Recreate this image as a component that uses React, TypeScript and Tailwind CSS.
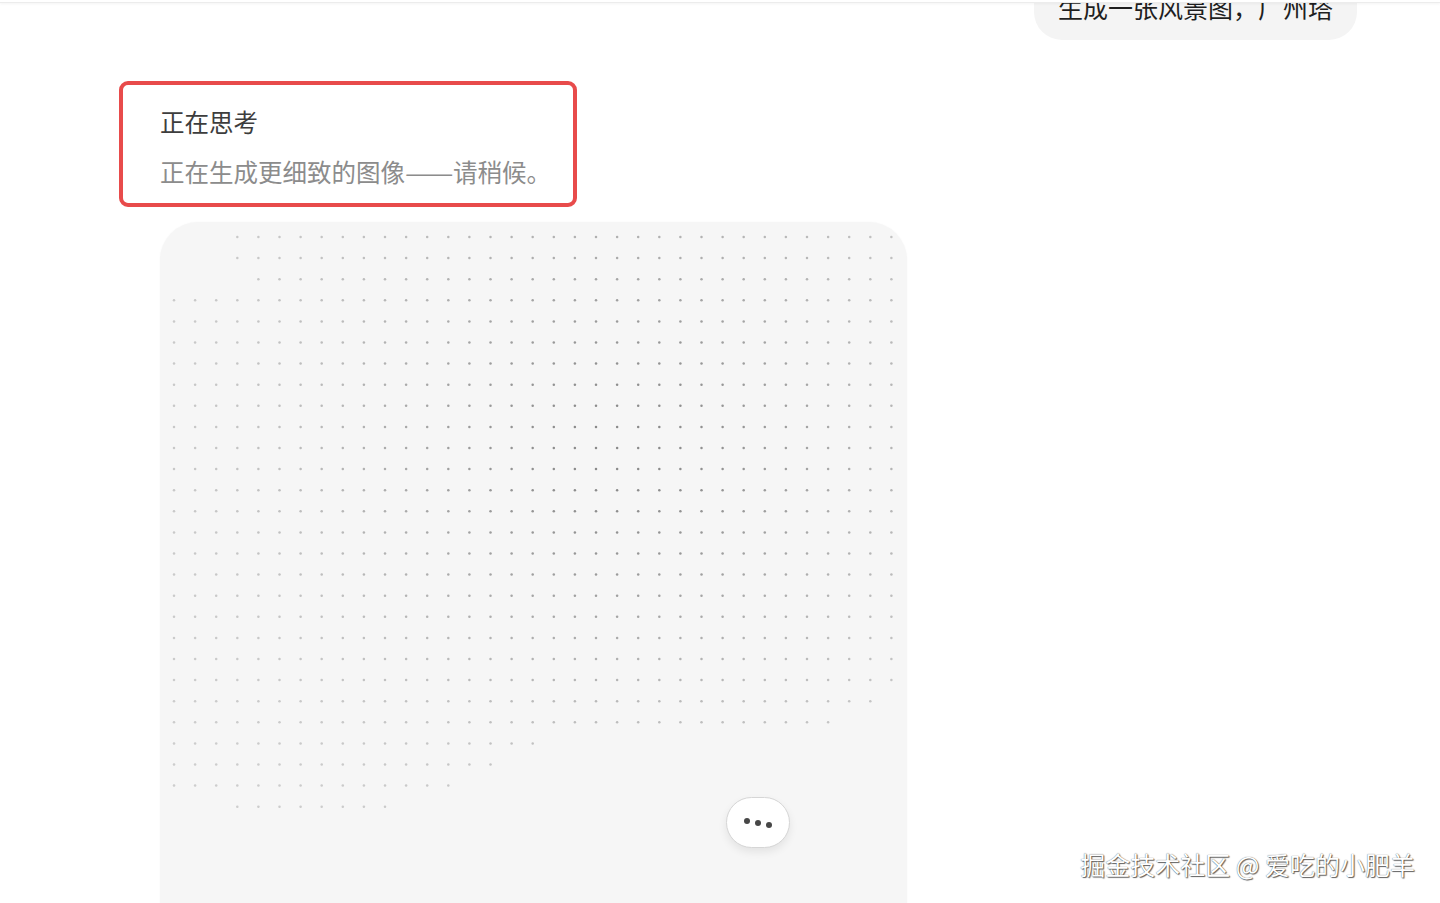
import React from 'react';

// 点阵每行可见的列区间 [起, 止]
const rowRanges: [number, number][] = Array.from({ length: 28 }, (_, r) => {
  if (r <= 1) return [3, 34];
  if (r === 2) return [4, 34];
  if (r === 22) return [0, 33];
  if (r === 23) return [0, 31];
  if (r === 24) return [0, 17];
  if (r === 25) return [0, 15];
  if (r === 26) return [0, 13];
  if (r === 27) return [3, 10];
  return [0, 34];
});

const GAP = 21.1;

const DotGrid = () => {
  const dots: React.ReactNode[] = [];
  rowRanges.forEach(([from, to], r) => {
    for (let c = from; c <= to; c++) {
      const dx = (c - 21) / 13;
      const dy = (r - 10) / 11;
      const d = Math.sqrt(dx * dx + dy * dy);
      const o = 0.3 + 0.5 * Math.exp(-d * d);
      dots.push(
        <circle key={`${r}-${c}`} cx={14 + c * GAP} cy={15 + r * GAP} r={1.25} fill="#6e6e6e" opacity={o} />
      );
    }
  });
  return (
    <svg width="747" height="747" className="absolute inset-0">
      {dots}
    </svg>
  );
};

export default function App() {
  return (
    <div
      className="relative h-[903px] w-full overflow-hidden bg-white"
      style={{ fontFamily: '"Noto Sans CJK SC", "Noto Sans", sans-serif' }}
    >
      {/* 顶栏残影 */}
      <div className="absolute left-0 right-0 top-0 z-20 h-[3px] bg-white border-b border-[#ececec] shadow-[0_1px_3px_rgba(0,0,0,0.05)]" />

      <div className="flex flex-col">
        {/* 用户消息 */}
        <div className="flex justify-end pr-[83px]">
          <div className="-mt-[26px] rounded-[28px] bg-[#f4f4f4] px-[24px] py-[15px] text-[25px] leading-[36px] text-[#1f1f1f]">
            生成一张风景图，广州塔
          </div>
        </div>

        {/* 思考状态（红框标注） */}
        <div className="ml-[119px] mt-[41px] w-[458px] rounded-[9px] border-4 border-[#e84b4b] pl-[37px] pt-[19px] pb-[13px]">
          <div className="text-[24.5px] leading-[36px] text-[#3d3d3d]">正在思考</div>
          <div className="mt-[14px] text-[24.5px] leading-[36px] text-[#8c8c8c]">
            正在生成更细致的图像
            <span className="inline-block w-[48px]">
              <span className="inline-block origin-left scale-x-[1.18]">——</span>
            </span>
            请稍候。
          </div>
        </div>

        {/* 图像占位卡片 */}
        <div className="relative ml-[160px] mt-[15px] h-[747px] w-[747px] rounded-[38px] bg-[#f6f6f6] shadow-[0_0_2px_rgba(0,0,0,0.04)]">
          <DotGrid />
          <div className="absolute left-[566px] top-[575px] flex h-[51px] w-[64px] items-center justify-center rounded-full border border-[#d6d6d6] bg-white shadow-[0_4px_8px_rgba(0,0,0,0.08)]">
            <div className="flex items-start gap-[5px]">
              <span className="block h-[6px] w-[6px] rounded-full bg-[#474747]" />
              <span className="mt-[2px] block h-[6px] w-[6px] rounded-full bg-[#474747]" />
              <span className="mt-[4px] block h-[6px] w-[6px] rounded-full bg-[#474747]" />
            </div>
          </div>
        </div>
      </div>

      {/* 水印 */}
      <div
        className="absolute bottom-[21px] right-[25px] z-30 text-[25px] leading-[36px] text-white"
        style={{ textShadow: '1px 1px 1px rgba(0,0,0,0.6), 0 0 1px rgba(0,0,0,0.7)' }}
      >
        掘金技术社区 @ 爱吃的小肥羊
      </div>
    </div>
  );
}
